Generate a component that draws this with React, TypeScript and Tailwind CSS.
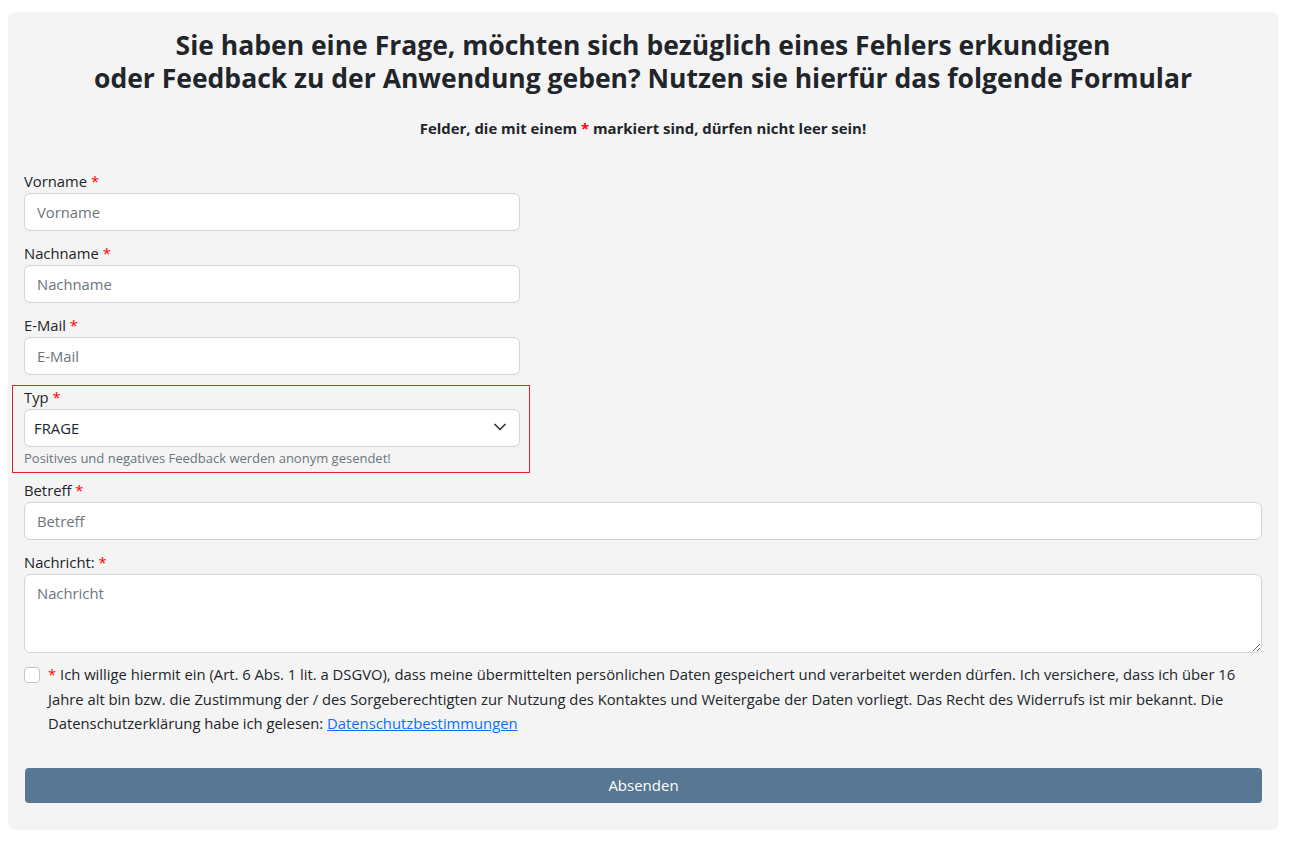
import React, { useState } from "react";

const font = { fontFamily: '"Open Sans", "Noto Sans", sans-serif' };

const Req: React.FC = () => <span className="text-[#ff0000]">*</span>;

const inputCls =
  "block w-full h-[38px] px-3 bg-white border border-[#ced4da] rounded-[6px] text-[14.8px] text-[#212529] placeholder:text-[#6c757d] outline-none";

const Field: React.FC<{ label: string; name: string; wide?: boolean }> = ({ label, name, wide }) => (
  <div className={`mb-[10px] ${wide ? "w-full" : "w-[496px]"}`}>
    <label htmlFor={name} className="block leading-6 text-[14.8px]">
      {label} <Req />
    </label>
    <input id={name} type="text" placeholder={label} className={inputCls} />
  </div>
);

const App: React.FC = () => {
  const [typ, setTyp] = useState("FRAGE");
  const [agree, setAgree] = useState(false);

  return (
    <div className="min-h-screen bg-white pl-2 pr-3 pt-3 text-[#212529]" style={font}>
      <form
        className="bg-[#f4f4f4] rounded-[8px] pl-4 pr-[17px] pt-[17px] pb-[27px]"
        onSubmit={(e) => e.preventDefault()}
      >
        <h2 className="text-center font-bold text-[26.5px] leading-[33px]">
          Sie haben eine Frage, möchten sich bezüglich eines Fehlers erkundigen
          <br />
          oder Feedback zu der Anwendung geben? Nutzen sie hierfür das folgende Formular
        </h2>
        <p className="text-center font-bold text-[14.9px] leading-5 mt-[23px] mb-[31px]">
          Felder, die mit einem <Req /> markiert sind, dürfen nicht leer sein!
        </p>

        <Field label="Vorname" name="vorname" />
        <Field label="Nachname" name="nachname" />
        <Field label="E-Mail" name="email" />

        {/* Typ */}
        <div className="w-[518px] -ml-3 border border-[#e0262c] pl-[11px] pr-[9px] pt-0 pb-[4px] mb-[5px]">
          <label htmlFor="typ" className="block leading-6 text-[14.8px] -mt-[1px]">
            Typ <Req />
          </label>
          <div className="relative">
            <select
              id="typ"
              value={typ}
              onChange={(e) => setTyp(e.target.value)}
              className="block w-full h-[38px] pl-[9px] pr-9 bg-white border border-[#ced4da] rounded-[6px] text-[14.8px] text-[#212529] appearance-none outline-none"
            >
              <option>FRAGE</option>
              <option>FEHLER</option>
              <option>POSITIVES FEEDBACK</option>
              <option>NEGATIVES FEEDBACK</option>
            </select>
            <svg
              className="absolute right-[14px] top-[14px] pointer-events-none"
              width="12"
              height="8"
              viewBox="0 0 12 8"
              fill="none"
            >
              <path d="M1 1.5l5 5 5-5" stroke="#343a40" strokeWidth="1.75" strokeLinecap="round" strokeLinejoin="round" />
            </svg>
          </div>
          <div className="text-[13px] leading-[19px] mt-[2px] text-[#6c757d]">
            Positives und negatives Feedback werden anonym gesendet!
          </div>
        </div>

        <Field label="Betreff" name="betreff" wide />

        <div className="mb-[9px]">
          <label htmlFor="nachricht" className="block leading-6 text-[14.8px]">
            Nachricht: <Req />
          </label>
          <textarea
            id="nachricht"
            placeholder="Nachricht"
            className="block w-full h-[79px] px-3 py-[6px] bg-white border border-[#ced4da] rounded-[6px] text-[14.8px] leading-6 text-[#212529] placeholder:text-[#6c757d] outline-none"
          />
        </div>

        <div className="flex items-start gap-2">
          <input
            type="checkbox"
            checked={agree}
            onChange={(e) => setAgree(e.target.checked)}
            className="mt-[5px] w-4 h-4 shrink-0 appearance-none bg-white border border-[#c4c4c4] rounded-[4px]"
          />
          <p className="text-[14.8px] leading-[24.5px]">
            <Req /> Ich willige hiermit ein (Art. 6 Abs. 1 lit. a DSGVO), dass meine übermittelten persönlichen Daten
            gespeichert und verarbeitet werden dürfen. Ich versichere, dass ich über 16 Jahre alt bin bzw. die
            Zustimmung der / des Sorgeberechtigten zur Nutzung des Kontaktes und Weitergabe der Daten vorliegt. Das
            Recht des Widerrufs ist mir bekannt. Die Datenschutzerklärung habe ich gelesen:{" "}
            <a href="#" className="text-[#0d6efd] underline">
              Datenschutzbestimmungen
            </a>
          </p>
        </div>

        <button
          type="submit"
          className="mt-[32px] ml-px block w-[calc(100%-1px)] h-[35px] bg-[#577792] text-white text-[15px] rounded-[4px]"
        >
          Absenden
        </button>
      </form>
    </div>
  );
};

export default App;
